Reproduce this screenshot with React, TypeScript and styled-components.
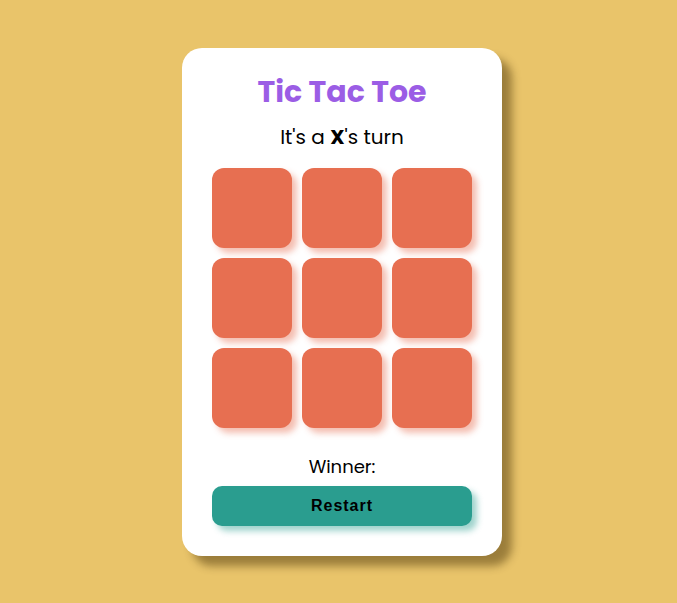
import React, { useState } from "react";
import styled, { createGlobalStyle } from "styled-components";

const Global = createGlobalStyle`
  html, body { margin: 0; padding: 0; }
  body {
    background: #e9c46a;
    font-family: "Poppins", "Open Sans", "Noto Sans", sans-serif;
    min-height: 603px;
  }
`;

const Page = styled.div`
  display: flex;
  justify-content: center;
  padding-top: 48px;
  padding-left: 7px;
`;

const Card = styled.div`
  width: 320px;
  box-sizing: border-box;
  background: #ffffff;
  border-radius: 20px;
  padding: 26px 30px 30px;
  box-shadow: 10px 10px 8px rgba(60, 40, 0, 0.45);
  display: flex;
  flex-direction: column;
  align-items: center;
`;

const Title = styled.h1`
  margin: 0;
  font-size: 30px;
  line-height: 36px;
  font-weight: 700;
  color: #9b5de5;
`;

const Turn = styled.p`
  margin: 14px 0 0;
  font-size: 20px;
  line-height: 26px;
  color: #000;
  b { font-weight: 700; }
`;

const Board = styled.div`
  margin-top: 18px;
  display: grid;
  grid-template-columns: repeat(3, 80px);
  grid-auto-rows: 80px;
  gap: 10px;
`;

const Cell = styled.button`
  border: none;
  padding: 0;
  border-radius: 12px;
  background: #e76f51;
  box-shadow: 5px 5px 6px rgba(231, 111, 81, 0.45);
  cursor: pointer;
  font-size: 40px;
  font-weight: 700;
  color: #fff;
`;

const Winner = styled.p`
  margin: 27px 0 0;
  font-size: 18px;
  line-height: 24px;
  color: #000;
`;

const Restart = styled.button`
  margin-top: 7px;
  width: 260px;
  height: 40px;
  border: none;
  border-radius: 10px;
  background: #2a9d8f;
  box-shadow: 5px 5px 6px rgba(42, 157, 143, 0.45);
  font-family: "Liberation Sans", Arial, sans-serif;
  font-size: 16px;
  font-weight: 700;
  letter-spacing: 1px;
  color: #000;
  cursor: pointer;
`;

export default function App() {
  const [cells, setCells] = useState<string[]>(Array(9).fill(""));
  const [xTurn, setXTurn] = useState(true);
  return (
    <>
      <Global />
      <Page>
        <Card>
          <Title>Tic Tac Toe</Title>
          <Turn>
            It's a <b>{xTurn ? "X" : "O"}</b>'s turn
          </Turn>
          <Board>
            {cells.map((c, i) => (
              <Cell
                key={i}
                onClick={() => {
                  if (c) return;
                  const n = cells.slice();
                  n[i] = xTurn ? "X" : "O";
                  setCells(n);
                  setXTurn(!xTurn);
                }}
              >
                {c}
              </Cell>
            ))}
          </Board>
          <Winner>Winner:</Winner>
          <Restart
            onClick={() => {
              setCells(Array(9).fill(""));
              setXTurn(true);
            }}
          >
            Restart
          </Restart>
        </Card>
      </Page>
    </>
  );
}
